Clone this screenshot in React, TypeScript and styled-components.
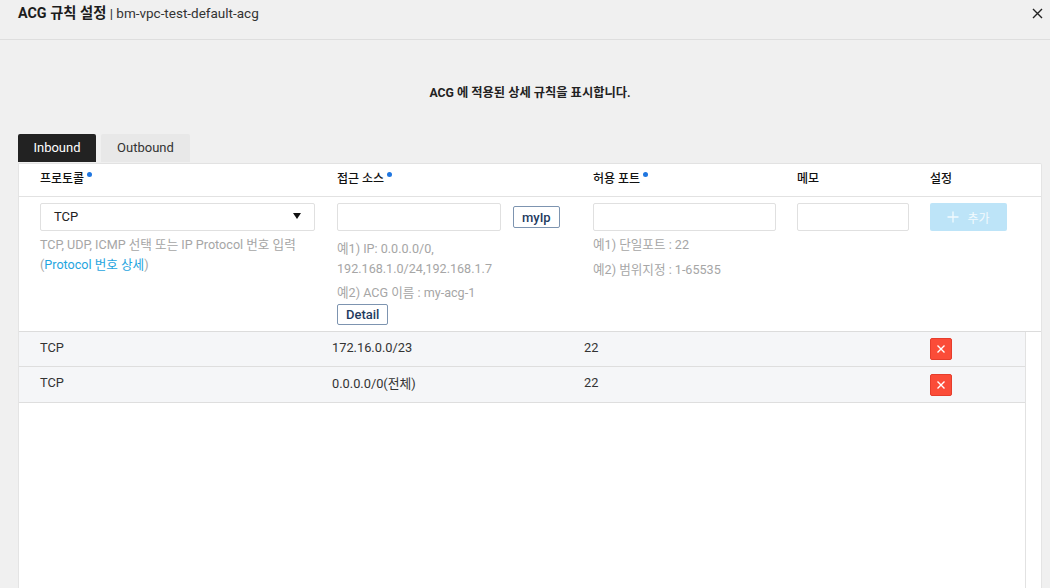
import React from 'react'
import styled, { createGlobalStyle } from 'styled-components'

const GlobalStyle = createGlobalStyle`
  html, body {
    margin: 0;
    padding: 0;
    height: 100%;
    overflow: hidden;
    background: #f0f0f0;
    font-family: Roboto, "Noto Sans CJK KR", sans-serif;
    color: #222;
  }
  * { box-sizing: border-box; }
`

const Page = styled.div`
  width: 1050px;
  height: 588px;
  overflow: hidden;
  display: flex;
  flex-direction: column;
`

const Header = styled.div`
  height: 40px;
  flex: none;
  padding: 4px 7px 0 18px;
  display: flex;
  justify-content: space-between;
  align-items: flex-start;
  border-bottom: 1px solid #dedede;
`

const Title = styled.div`
  font-size: 13.5px;
  line-height: 18px;
  color: #333;
  b {
    font-size: 14.3px;
    font-weight: 700;
    color: #1c1c1c;
  }
`

const Close = styled.svg`
  width: 11px;
  height: 11px;
  margin-top: 4px;
`

const Desc = styled.div`
  flex: none;
  margin-top: 45px;
  height: 16px;
  font-size: 12.25px;
  line-height: 16px;
  font-weight: 700;
  text-align: center;
  color: #222;
  padding-left: 10px;
`

const Tabs = styled.div`
  flex: none;
  margin: 33px 0 0 18px;
  display: flex;
  gap: 5px;
  height: 29px;
`

const Tab = styled.div<{ $active?: boolean }>`
  height: 28px;
  padding-bottom: 2px;
  display: flex;
  align-items: center;
  justify-content: center;
  width: ${p => (p.$active ? '78px' : '89px')};
  font-size: 13px;
  border-radius: 2px 2px 0 0;
  background: ${p => (p.$active ? '#222' : '#e8e8e8')};
  color: ${p => (p.$active ? '#fff' : '#333')};
`

const Panel = styled.div`
  flex: 1;
  margin: 0 8px 0 18px;
  background: #fff;
  border-top: 1px solid #e2e2e2;
  border-left: 1px solid #e4e4e4;
  border-right: 1px solid #e4e4e4;
  border-top-right-radius: 2px;
  display: flex;
  flex-direction: column;
  min-height: 0;
`

const columns = '297px 256px 204px 133px 1fr'

const HeadRow = styled.div`
  display: grid;
  grid-template-columns: ${columns};
  height: 33px;
  flex: none;
  padding: 7px 0 0 21px;
  border-bottom: 1px solid #e2e2e2;
`

const HeadCell = styled.div`
  font-size: 12px;
  line-height: 17px;
  font-weight: 500;
  color: #111;
`

const Required = styled.span`
  position: relative;
  top: -6px;
  display: inline-block;
  width: 5px;
  height: 5px;
  margin-left: 3px;
  border-radius: 50%;
  background: #1f76e0;
`

const FormRow = styled.div`
  display: grid;
  grid-template-columns: ${columns};
  height: 135px;
  flex: none;
  padding: 6px 0 0 21px;
  border-bottom: 1px solid #dcdcdc;
`

const Field = styled.div<{ $width: number }>`
  width: ${p => p.$width}px;
  height: 28px;
  background: #fff;
  border: 1px solid #e0e0e0;
  border-radius: 2px;
  display: flex;
  align-items: center;
  justify-content: space-between;
  padding: 0 13px 2px;
  font-size: 13px;
  color: #222;
`

const Caret = styled.span`
  width: 0;
  height: 0;
  border-left: 4.5px solid transparent;
  border-right: 4.5px solid transparent;
  border-top: 6px solid #111;
`

const InputLine = styled.div`
  display: flex;
  align-items: center;
  gap: 12px;
`

const OutlineButton = styled.button`
  height: 22px;
  padding: 0 8px;
  background: #fff;
  border: 1px solid #7d94b0;
  border-radius: 2px;
  font-family: inherit;
  font-size: 13px;
  font-weight: 500;
  color: #1f3b5f;
`

const DetailButton = styled(OutlineButton)`
  display: block;
  height: 21px;
  margin-top: 1px;
`

const Hint = styled.div<{ $top?: number }>`
  margin-top: ${p => p.$top ?? 0}px;
  font-size: 12.6px;
  line-height: 20px;
  color: #a6a6a6;
  white-space: nowrap;
`

const HelpLink = styled.span`
  color: #1fa5e0;
`

const AddButton = styled.div`
  width: 77px;
  height: 28px;
  display: flex;
  align-items: center;
  justify-content: center;
  gap: 8px;
  background: #bde4f8;
  border-radius: 2px;
  color: #f2fafe;
  font-size: 12px;
`

const ListArea = styled.div`
  flex: 1;
  display: flex;
  min-height: 0;
`

const List = styled.div`
  flex: 1;
  border-right: 1px solid #e2e2e2;
`

const ScrollTrack = styled.div`
  width: 15px;
  flex: none;
`

const DataRow = styled.div`
  display: grid;
  grid-template-columns: 292px 252px 346px 1fr;
  height: 35px;
  padding-left: 21px;
  align-items: center;
  background: #f5f6f8;
  border-bottom: 1px solid #dedede;
  font-size: 12.8px;
  color: #333;
  &:nth-child(2) { height: 36px; }
`

const DataCell = styled.span`
  margin-bottom: 4px;
`

const DeleteButton = styled.div`
  width: 22px;
  height: 22px;
  display: flex;
  align-items: center;
  justify-content: center;
  background: #fb4c38;
  border: 1px solid #e63d2c;
  border-radius: 2px;
`

const rules = [
  { protocol: 'TCP', source: '172.16.0.0/23', port: '22' },
  { protocol: 'TCP', source: '0.0.0.0/0(전체)', port: '22' },
]

const App = () => {
  return (
    <Page>
      <GlobalStyle />
      <Header>
        <Title><b>ACG 규칙 설정</b> | bm-vpc-test-default-acg</Title>
        <Close viewBox="0 0 11 11">
          <path d="M1 1l9 9M10 1l-9 9" stroke="#222" strokeWidth="1.4" fill="none" />
        </Close>
      </Header>
      <Desc>ACG 에 적용된 상세 규칙을 표시합니다.</Desc>
      <Tabs>
        <Tab $active>Inbound</Tab>
        <Tab>Outbound</Tab>
      </Tabs>
      <Panel>
        <HeadRow>
          <HeadCell>프로토콜<Required /></HeadCell>
          <HeadCell>접근 소스<Required /></HeadCell>
          <HeadCell>허용 포트<Required /></HeadCell>
          <HeadCell>메모</HeadCell>
          <HeadCell>설정</HeadCell>
        </HeadRow>
        <FormRow>
          <div>
            <Field $width={275}>TCP<Caret /></Field>
            <Hint $top={4}>TCP, UDP, ICMP 선택 또는 IP Protocol 번호 입력</Hint>
            <Hint>(<HelpLink>Protocol 번호 상세</HelpLink>)</Hint>
          </div>
          <div>
            <InputLine>
              <Field $width={164} />
              <OutlineButton>myIp</OutlineButton>
            </InputLine>
            <Hint $top={8}>예1) IP: 0.0.0.0/0,</Hint>
            <Hint>192.168.1.0/24,192.168.1.7</Hint>
            <Hint $top={4}>예2) ACG 이름 : my-acg-1</Hint>
            <DetailButton>Detail</DetailButton>
          </div>
          <div>
            <Field $width={183} />
            <Hint $top={4}>예1) 단일포트 : 22</Hint>
            <Hint $top={5}>예2) 범위지정 : 1-65535</Hint>
          </div>
          <div>
            <Field $width={112} />
          </div>
          <div>
            <AddButton>
              <svg width="12" height="12" viewBox="0 0 12 12">
                <path d="M6 0.5v11M0.5 6h11" stroke="#f2fafe" strokeWidth="1.3" fill="none" />
              </svg>
              추가
            </AddButton>
          </div>
        </FormRow>
        <ListArea>
          <List>
            {rules.map((rule, i) => (
              <DataRow key={i}>
                <DataCell>{rule.protocol}</DataCell>
                <DataCell>{rule.source}</DataCell>
                <DataCell>{rule.port}</DataCell>
                <DeleteButton>
                  <svg width="10" height="10" viewBox="0 0 10 10">
                    <path d="M1.5 1.5l7 7M8.5 1.5l-7 7" stroke="#fff" strokeWidth="1.4" fill="none" />
                  </svg>
                </DeleteButton>
              </DataRow>
            ))}
          </List>
          <ScrollTrack />
        </ListArea>
      </Panel>
    </Page>
  )
}

export default App
